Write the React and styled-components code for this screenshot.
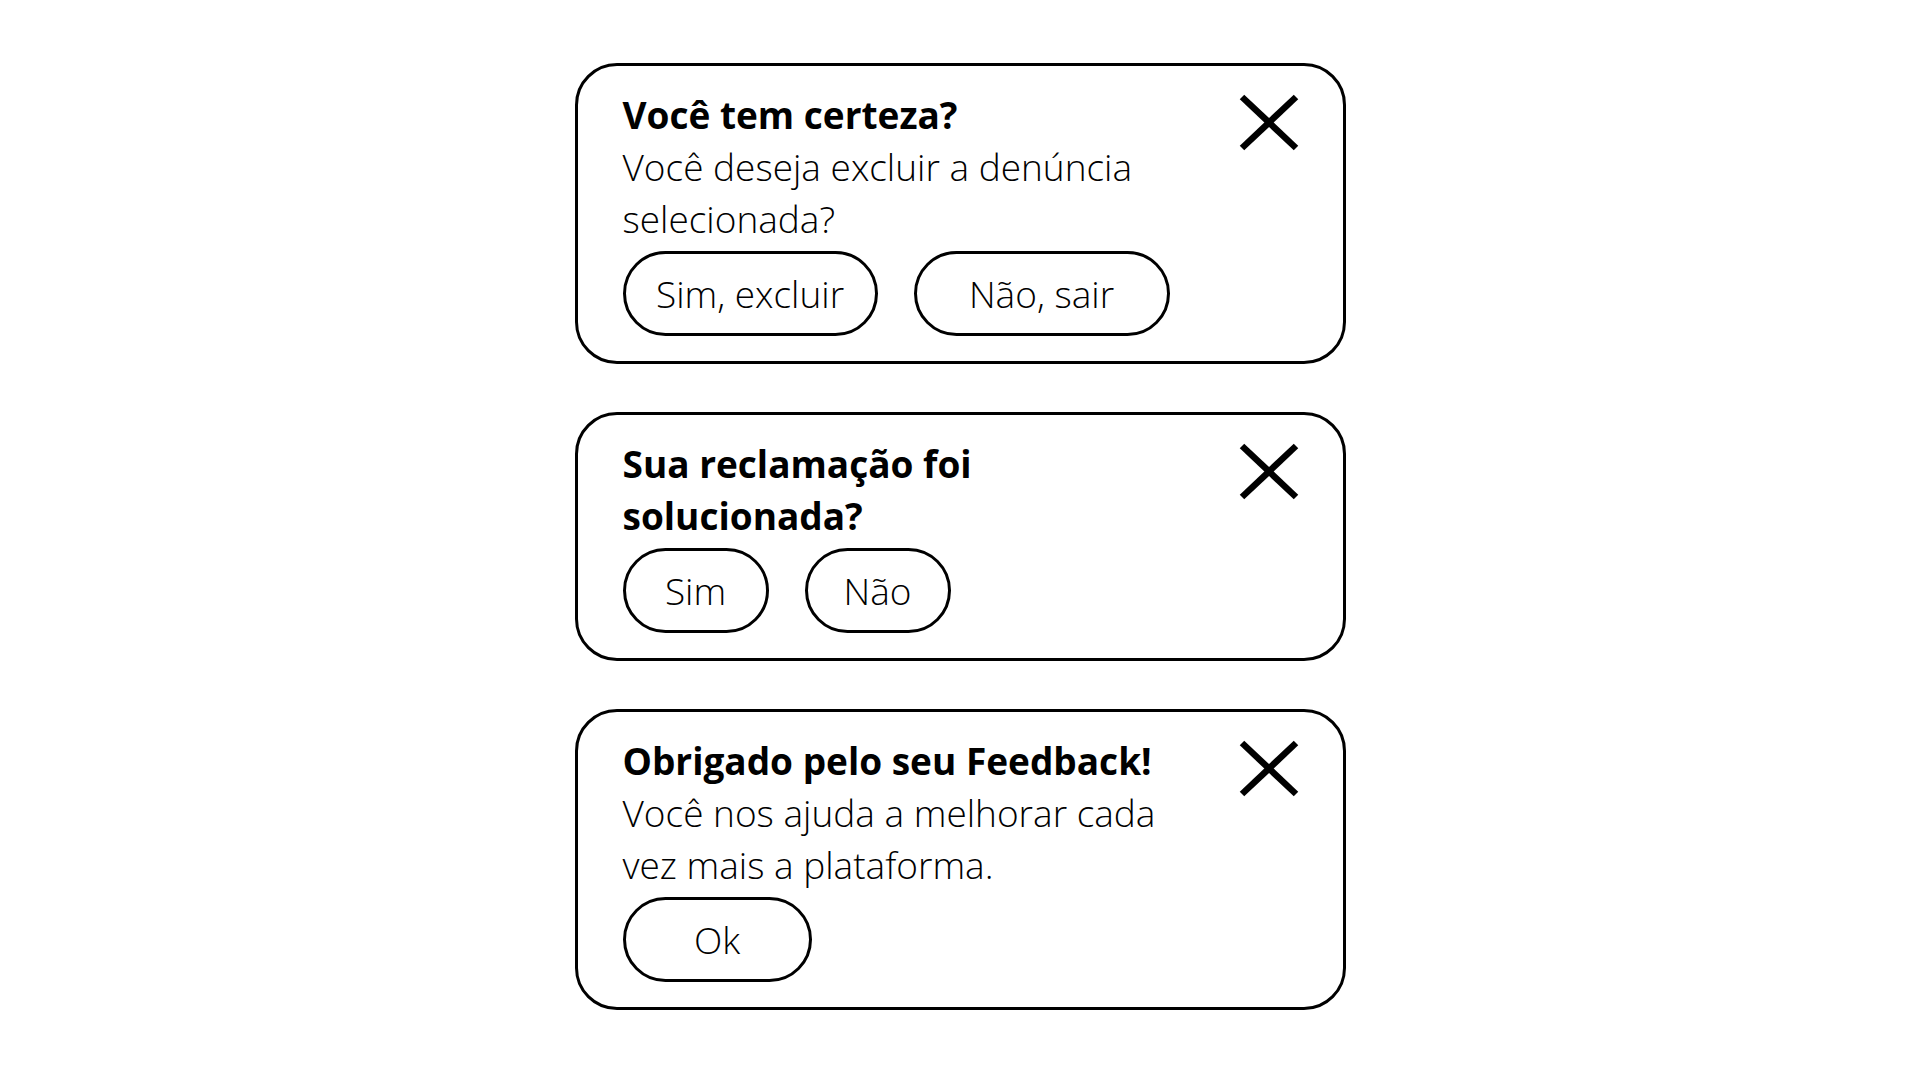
import React from "react";
import styled, { createGlobalStyle } from "styled-components";

const GlobalStyle = createGlobalStyle`
  html, body {
    margin: 0;
    padding: 0;
    background: #fff;
  }
  body {
    font-family: "Open Sans", "Liberation Sans", sans-serif;
    color: #000;
  }
`;

// dados dos três modais
const modals = [
  {
    id: 1,
    title: "Você tem certeza?",
    text: "Você deseja excluir a denúncia selecionada?",
    buttons: [
      { label: "Sim, excluir", width: 255 },
      { label: "Não, sair", width: 256 },
    ],
  },
  {
    id: 2,
    title: "Sua reclamação foi solucionada?",
    buttons: [
      { label: "Sim", width: 146 },
      { label: "Não", width: 146 },
    ],
  },
  {
    id: 3,
    title: "Obrigado pelo seu Feedback!",
    text: "Você nos ajuda a melhorar cada vez mais a plataforma.",
    buttons: [{ label: "Ok", width: 189 }],
  },
];

const CloseIcon = () => (
  <svg width="60" height="57" viewBox="0 0 60 57" fill="none">
    <line x1="3" y1="3" x2="57" y2="54" stroke="#000" strokeWidth="6.5" />
    <line x1="57" y1="3" x2="3" y2="54" stroke="#000" strokeWidth="6.5" />
  </svg>
);

const App = () => {
  return (
    <>
      <GlobalStyle />
      <StPage>
        {modals.map((modal) => (
          <StCard key={modal.id}>
            <StContent>
              <StTitle>{modal.title}</StTitle>
              {modal.text && <StText>{modal.text}</StText>}
              <StButtons>
                {modal.buttons.map((btn) => (
                  <StButton key={btn.label} $width={btn.width}>
                    {btn.label}
                  </StButton>
                ))}
              </StButtons>
            </StContent>
            <StClose aria-label="Fechar">
              <CloseIcon />
            </StClose>
          </StCard>
        ))}
      </StPage>
    </>
  );
};

export default App;

const StPage = styled.div`
  width: 100%;
  min-height: 1080px;
  display: flex;
  flex-direction: column;
  align-items: center;
  gap: 48px;
  padding-top: 63px;
  box-sizing: border-box;
`;

const StCard = styled.div`
  width: 771px;
  box-sizing: border-box;
  border: 3px solid #000;
  border-radius: 42px;
  padding: 23px 44px 25px 45px;
  display: flex;
  justify-content: space-between;
  align-items: flex-start;
  background: #fff;
`;

const StContent = styled.div`
  display: flex;
  flex-direction: column;
  max-width: 560px;
`;

const StTitle = styled.h2`
  margin: 0;
  font-size: 37px;
  line-height: 52px;
  font-weight: 700;
`;

const StText = styled.p`
  margin: 0;
  font-size: 37px;
  line-height: 52px;
  font-weight: 300;
`;

const StButtons = styled.div`
  display: flex;
  gap: 36px;
  margin-top: 6px;
`;

const StButton = styled.button`
  width: ${({ $width }) => $width}px;
  height: 85px;
  box-sizing: border-box;
  border: 3.5px solid #000;
  border-radius: 43px;
  background: #fff;
  font-family: "Open Sans", "Liberation Sans", sans-serif;
  font-size: 37px;
  font-weight: 300;
  color: #000;
  padding: 0;
  cursor: pointer;
`;

const StClose = styled.button`
  margin-top: 5px;
  border: none;
  background: none;
  padding: 0;
  display: flex;
  cursor: pointer;
`;
